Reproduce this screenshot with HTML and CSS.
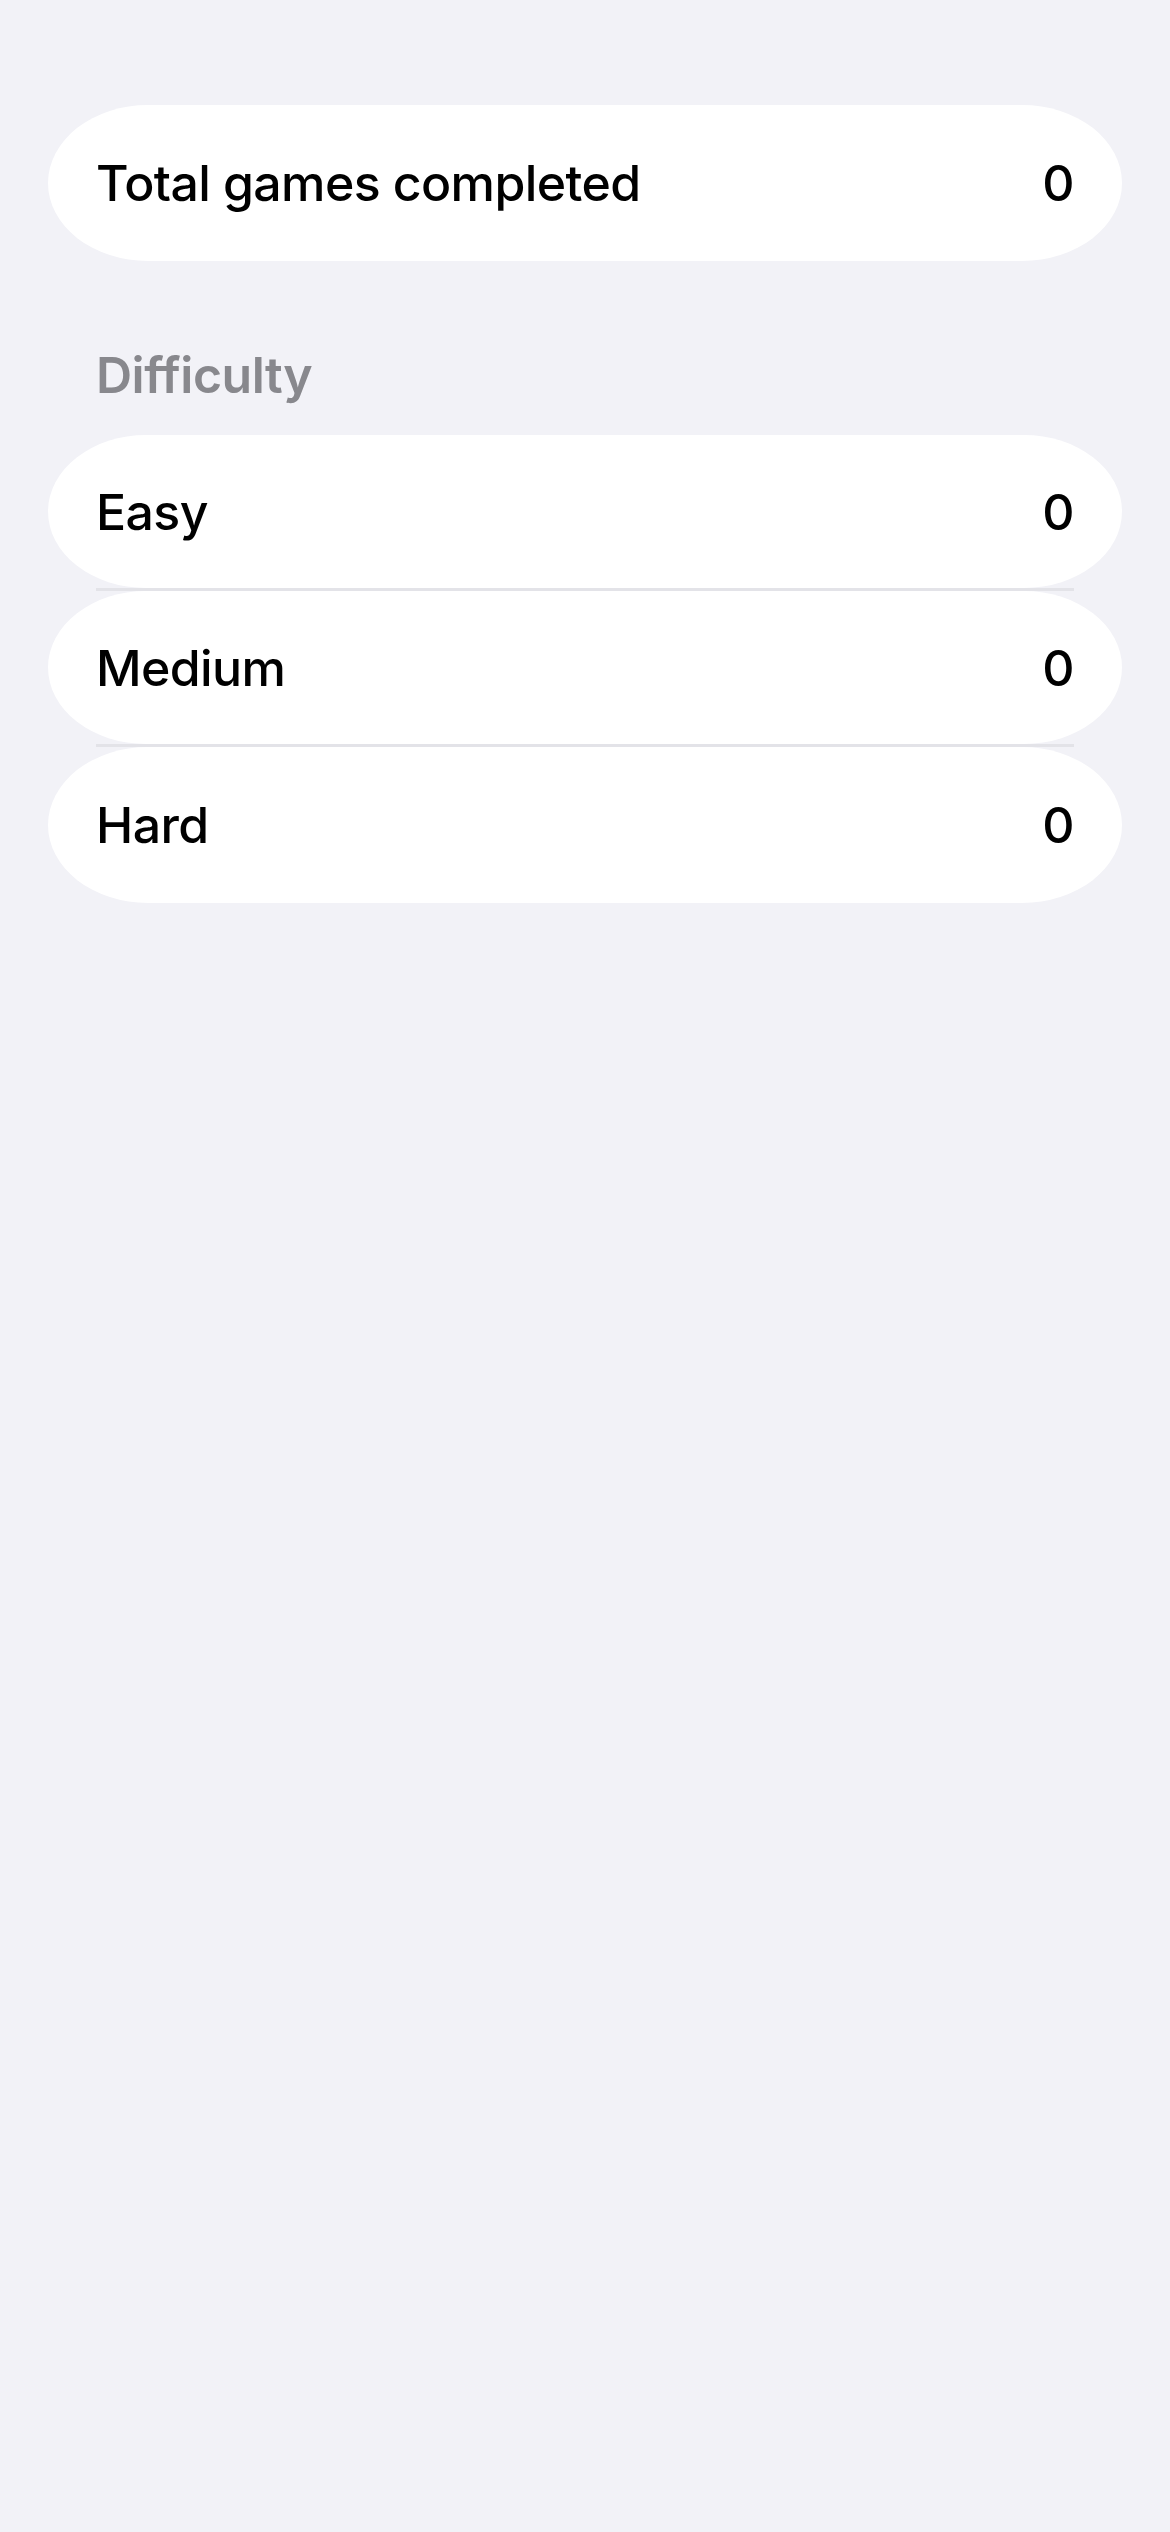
FILE: index.html
```html
<!DOCTYPE html>
<html lang="en">
<head>
<meta charset="utf-8">
<title>Statistics</title>
<link rel="stylesheet" href="styles.css">
</head>
<body>
<main class="screen">
  <section class="group">
    <div class="row row-single">
      <span class="label">Total games completed</span>
      <span class="value">0</span>
    </div>
  </section>

  <h2 class="section-title">Difficulty</h2>

  <section class="group">
    <div class="row">
      <span class="label">Easy</span>
      <span class="value">0</span>
    </div>
    <div class="separator"></div>
    <div class="row">
      <span class="label">Medium</span>
      <span class="value">0</span>
    </div>
    <div class="separator"></div>
    <div class="row row-last">
      <span class="label">Hard</span>
      <span class="value">0</span>
    </div>
  </section>
</main>
</body>
</html>
```

FILE: styles.css
```css
html, body {
  margin: 0;
  padding: 0;
  background: #f2f2f7;
}

body {
  font-family: Inter, "Noto Sans", "Liberation Sans", sans-serif;
  color: #000;
  -webkit-font-smoothing: antialiased;
}

.screen {
  padding: 105px 48px 0 48px;
  min-height: 2532px;
  box-sizing: border-box;
}

.group {
  display: flex;
  flex-direction: column;
}

.row {
  height: 153px;
  background: #fff;
  border-radius: 100px / 78px;
  display: flex;
  align-items: center;
  justify-content: space-between;
  padding: 0 48px 0 48px;
  font-size: 50px;
  font-weight: 500;
  letter-spacing: -0.6px;
}

.row-single,
.row-last {
  height: 156px;
}

.separator {
  height: 3px;
  margin: 0 48px;
  background: #e3e3e8;
}

.section-title {
  margin: 84px 0 30px 0;
  padding-left: 48px;
  height: 60px;
  line-height: 60px;
  font-size: 50px;
  font-weight: 600;
  color: #88888d;
  letter-spacing: -0.5px;
}
```
